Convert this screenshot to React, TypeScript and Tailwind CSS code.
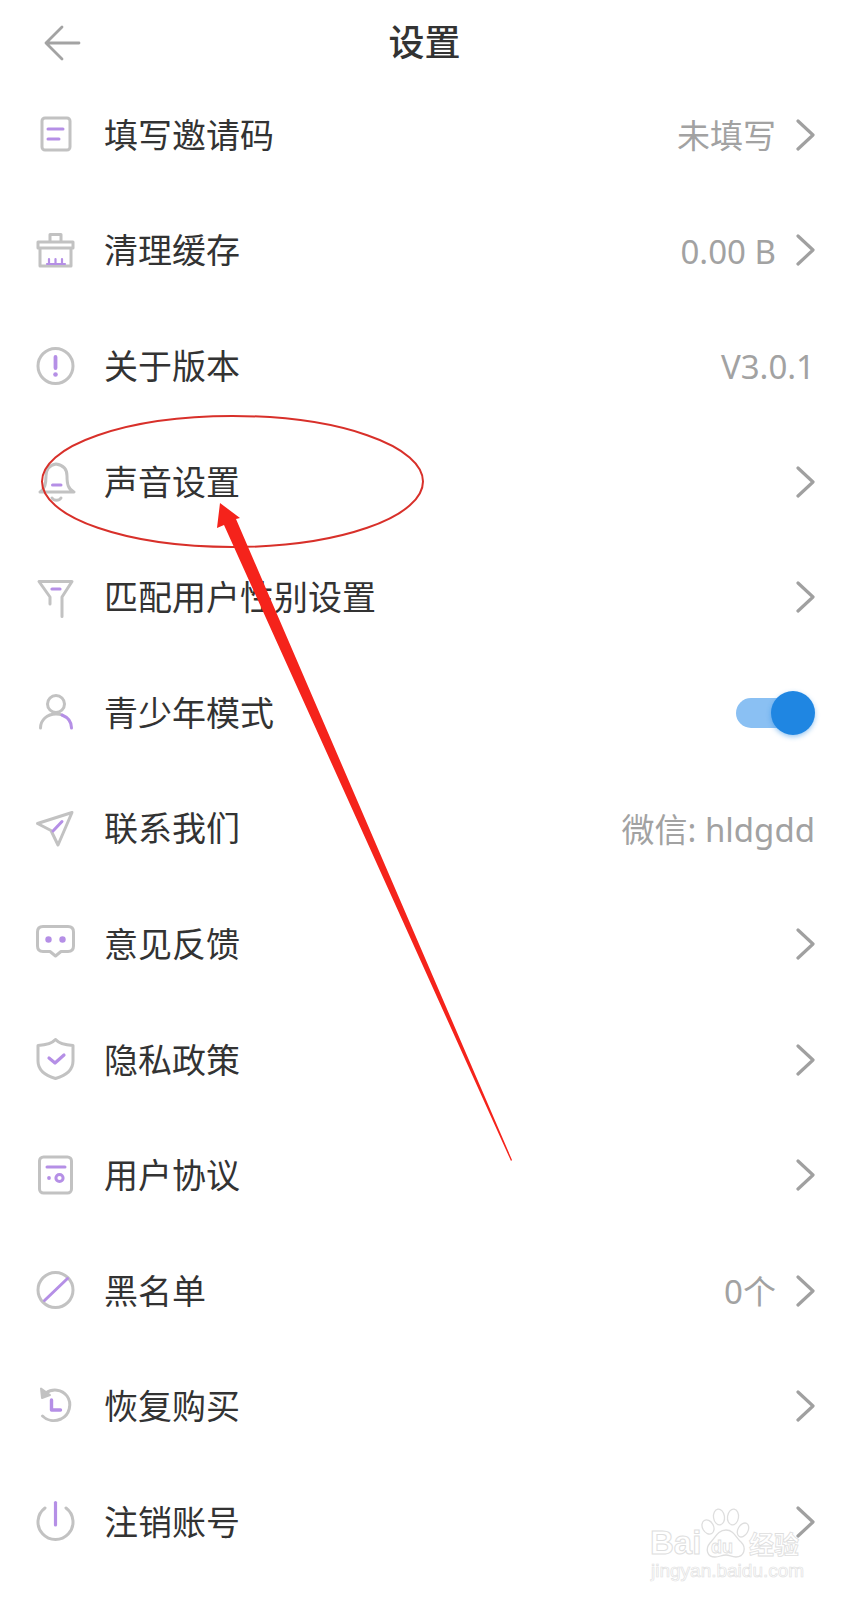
import React from "react";

const G = "#c2c2c2";
const P = "#b58fe6";
const S = { fill: "none", stroke: G, strokeWidth: 3, strokeLinecap: "round" as const, strokeLinejoin: "round" as const };
const Q = { fill: "none", stroke: P, strokeWidth: 3, strokeLinecap: "round" as const, strokeLinejoin: "round" as const };

const icons: Record<string, React.ReactNode> = {
  code: (
    <>
      <rect x="7" y="3" width="28" height="32" rx="3" {...S} />
      <path d="M13 14H28M13 24H24" {...Q} />
    </>
  ),
  brush: (
    <>
      <path d="M15 11V3.5H26V11M3 11H38V17H3ZM5 17V35H36V17" {...S} />
      <path d="M12 33H30M14 28V33M20.5 28V33M27 28V33" {...Q} strokeWidth={2.2} />
    </>
  ),
  info: (
    <>
      <circle cx="20.5" cy="20" r="17.5" {...S} />
      <path d="M20.5 11V22" {...Q} strokeWidth={3.8} />
      <circle cx="20.5" cy="28.5" r="2.3" fill={P} />
    </>
  ),
  bell: (
    <>
      <path d="M5 30C10 27 11 22 11 14C11 7 15 3 21 2C28 3 32 7 32 14C32 22 33 27 39 30Z" {...S} />
      <path d="M17 36C19 39 24 39 26 36" {...S} />
      <path d="M17.5 23H26" {...Q} />
    </>
  ),
  funnel: (
    <>
      <path d="M15 26V19L4 3.5H37L27 19V38.5" {...S} />
      <path d="M17 11H25" {...Q} strokeWidth={3.2} />
    </>
  ),
  user: (
    <>
      <circle cx="21" cy="11" r="8.5" {...S} />
      <path d="M5.5 35C5.5 27 12 21 21 21C24 21 26 21.5 27 22" {...S} />
      <path d="M27 22C32 24 36.5 28.5 36.5 35" {...Q} />
    </>
  ),
  send: (
    <>
      <path d="M37 3.5L2.5 14.5L16 21.5L23 36Z" {...S} />
      <path d="M18 22L27 12.5" {...Q} />
    </>
  ),
  chat: (
    <>
      <path d="M8 2.5H33C36.5 2.5 38.5 4.5 38.5 8V22C38.5 25.5 36.5 27.5 33 27.5H26L20.5 32L15 27.5H8C4.5 27.5 2.5 25.5 2.5 22V8C2.5 4.5 4.5 2.5 8 2.5Z" {...S} />
      <circle cx="13.5" cy="15.5" r="3.2" fill={P} />
      <circle cx="27.5" cy="15.5" r="3.2" fill={P} />
    </>
  ),
  shield: (
    <>
      <path d="M20.5 -0.5C24 3.5 31 5 38 5.5V21C38 30 31 35.5 20.5 38.5C10 35.5 3 30 3 21V5.5C10 5 17 3.5 20.5 -0.5Z" {...S} />
      <path d="M14 18L20 23L29 15" {...Q} strokeWidth={3.2} />
    </>
  ),
  doc: (
    <>
      <rect x="4.5" y="1" width="32" height="36" rx="4" {...S} />
      <path d="M12 11H30" {...Q} />
      <circle cx="14" cy="22" r="1.9" fill={P} />
      <circle cx="24.5" cy="22" r="3.6" {...Q} />
    </>
  ),
  ban: (
    <>
      <circle cx="20.5" cy="19" r="17.5" {...S} />
      <path d="M9.5 29.5L32.5 7.5" {...Q} />
    </>
  ),
  restore: (
    <>
      <path d="M11 6C17 1.5 27 2 32 9C37.5 16.5 34.5 28 26 32C19 35 12 33.5 7.5 29" {...S} />
      <path d="M6 1.5L7 11L15 8Z" fill={G} stroke={G} strokeWidth={2} strokeLinejoin="round" />
      <path d="M16.5 13V23H25.5" {...Q} strokeWidth={3.4} />
    </>
  ),
  power: (
    <>
      <path d="M10 6A17.5 17.5 0 1 0 31 6" {...S} />
      <path d="M20.5 0.5V23" {...Q} strokeWidth={3.2} />
    </>
  ),
};

const Chevron = () => (
  <svg width="19" height="32" viewBox="0 0 19 32" className="shrink-0" fill="none">
    <path d="M2 2L17 16L2 30" stroke="#a0a0a0" strokeWidth="3.2" strokeLinecap="round" strokeLinejoin="round" />
  </svg>
);

type Row = { icon: string; label: string; value?: string; chevron?: boolean; toggle?: boolean };
const rows: Row[] = [
  { icon: "code", label: "填写邀请码", value: "未填写", chevron: true },
  { icon: "brush", label: "清理缓存", value: "0.00 B", chevron: true },
  { icon: "info", label: "关于版本", value: "V3.0.1" },
  { icon: "bell", label: "声音设置", chevron: true },
  { icon: "funnel", label: "匹配用户性别设置", chevron: true },
  { icon: "user", label: "青少年模式", toggle: true },
  { icon: "send", label: "联系我们", value: "微信: hldgdd" },
  { icon: "chat", label: "意见反馈", chevron: true },
  { icon: "shield", label: "隐私政策", chevron: true },
  { icon: "doc", label: "用户协议", chevron: true },
  { icon: "ban", label: "黑名单", value: "0个", chevron: true },
  { icon: "restore", label: "恢复购买", chevron: true },
  { icon: "power", label: "注销账号", chevron: true },
];

export default function App() {
  return (
    <div className="relative w-[849px] h-[1600px] overflow-hidden bg-white font-['Roboto','Noto_Sans_CJK_SC',sans-serif]">
      <header className="relative flex h-[77px] items-center justify-center pt-[11px]">
        <svg width="38" height="38" viewBox="0 0 38 38" fill="none" className="absolute left-[43px] top-[24px]">
          <path d="M36 19H3M19 3L3 19L19 35" stroke="#a3a3a3" strokeWidth="2.8" strokeLinecap="round" strokeLinejoin="round" />
        </svg>
        <h1 className="text-[36px] font-medium leading-none text-[#333333]">设置</h1>
      </header>

      {rows.map((r) => (
        <div key={r.label} className="flex h-[115.6px] items-center pl-[35px] pr-[34px]">
          <svg width="40" height="40" viewBox="0 0 40 40" className="mt-[1px] shrink-0 overflow-visible">
            {icons[r.icon]}
          </svg>
          <span className="ml-[29px] flex-1 pt-[2px] text-[34px] leading-none text-[#333333]">{r.label}</span>
          {r.value && <span className="pt-[2px] font-['Noto_Sans','Noto_Sans_CJK_SC',sans-serif] text-[33px] leading-none text-[#a2a2a2]">{r.value}</span>}
          {r.chevron && (
            <span className="ml-[20px]">
              <Chevron />
            </span>
          )}
          {r.toggle && (
            <div className="relative flex h-[44px] w-[79px] items-center">
              <div className="h-[30px] w-[60px] rounded-full bg-[#8ac0f3]" />
              <div className="absolute right-0 top-0 h-[44px] w-[44px] rounded-full bg-[#1f86e2] shadow-[0_2px_5px_rgba(31,134,226,0.45)]" />
            </div>
          )}
        </div>
      ))}

      {/* Red annotation drawn over the screenshot */}
      <svg width="849" height="1600" viewBox="0 0 849 1600" fill="none" className="pointer-events-none absolute left-0 top-0">
        <ellipse cx="232.5" cy="481.5" rx="190.5" ry="65.5" stroke="#d8302a" strokeWidth="2" />
        <polygon points="511,1161 512,1160 236,519 240,518 220,503 217,528 224,525" fill="#f5231b" />
      </svg>

      {/* Baidu watermark */}
      <div className="pointer-events-none absolute left-[650px] top-[1508px] h-[76px] w-[156px]">
        <svg width="100" height="54" viewBox="0 0 100 54" fill="none" className="absolute left-[50px] top-0" stroke="#dedede" strokeWidth="1.3">
          <ellipse cx="8" cy="19" rx="5.5" ry="7.5" transform="rotate(-30 8 19)" />
          <ellipse cx="19" cy="9" rx="5.5" ry="8" transform="rotate(-8 19 9)" />
          <ellipse cx="33" cy="9" rx="5.5" ry="8" transform="rotate(8 33 9)" />
          <ellipse cx="43" cy="22" rx="5" ry="7.5" transform="rotate(30 43 22)" />
          <path d="M26 22C34 22 36 30 41 34C47 40 44 49 36 49C31 49 30 47 26 47C21 47 20 49 15 49C7 49 5 41 10 35C15 30 18 22 26 22Z" />
        </svg>
        <span className="absolute left-0 top-[18px] font-['Liberation_Sans',sans-serif] text-[33px] font-bold leading-none text-transparent [-webkit-text-stroke:1px_#dedede]">Bai</span>
        <span className="absolute left-[61px] top-[30px] font-['Liberation_Sans',sans-serif] text-[18px] font-bold leading-none text-transparent [-webkit-text-stroke:0.8px_#dedede]">du</span>
        <span className="absolute left-[99px] top-[23px] font-['Noto_Sans_CJK_SC',sans-serif] text-[25px] font-bold leading-none text-transparent [-webkit-text-stroke:0.8px_#dedede]">经验</span>
        <span className="absolute left-[1px] top-[53px] font-['Liberation_Sans',sans-serif] text-[19px] leading-none text-transparent [-webkit-text-stroke:0.7px_#e2e2e2]">jingyan.baidu.com</span>
      </div>
    </div>
  );
}
